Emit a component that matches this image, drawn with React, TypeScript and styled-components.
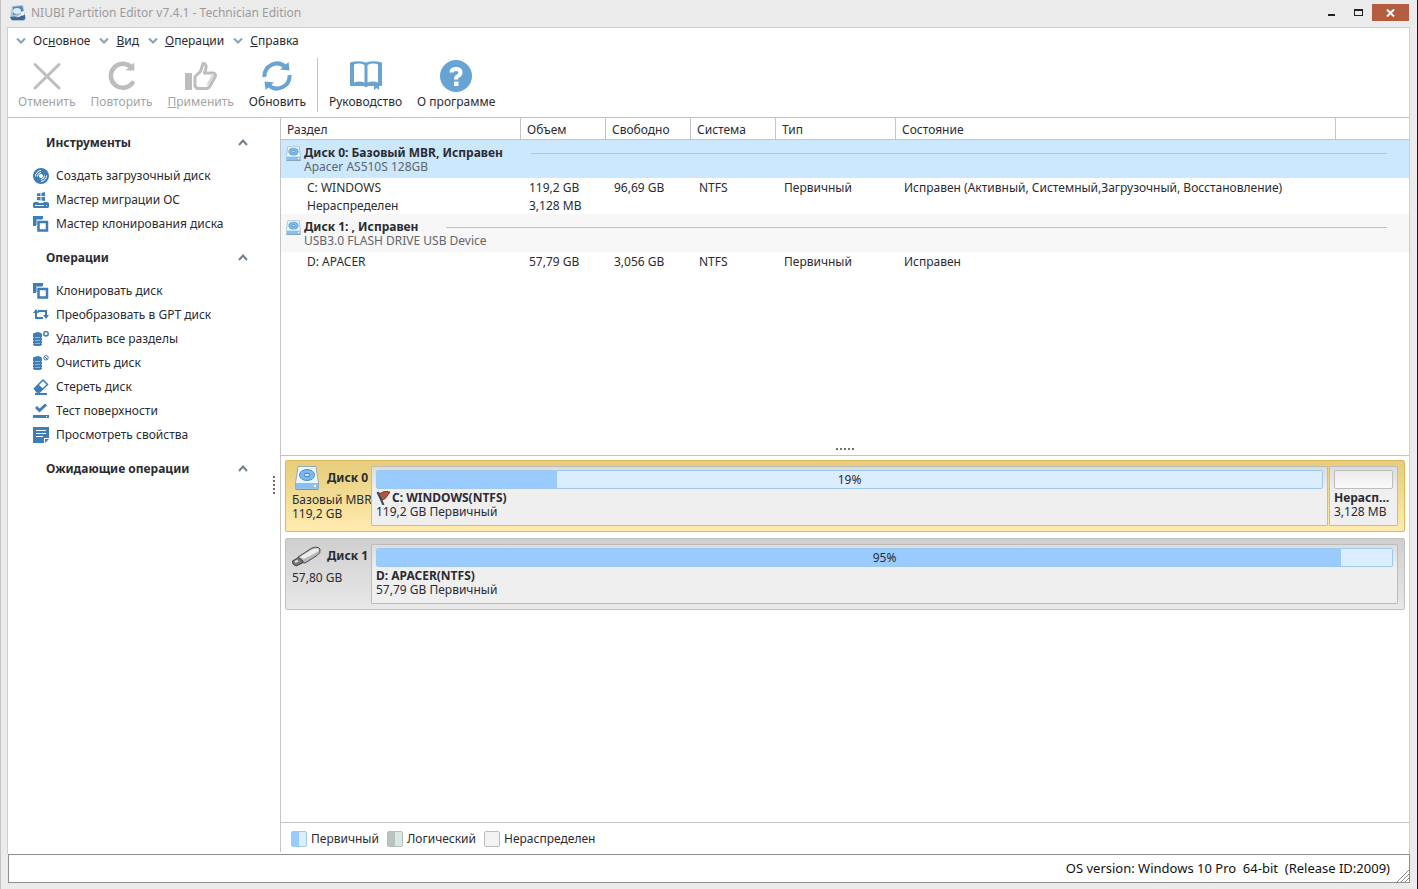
import React from "react";
import styled, { createGlobalStyle, css } from "styled-components";

const GlobalStyle = createGlobalStyle`
  *, *::before, *::after { box-sizing: border-box; }
  body {
    margin: 0;
    background: #ebebeb;
    color: #2b2b33;
    font-family: "Noto Sans", "Open Sans", sans-serif;
    font-size: 12px;
    line-height: 14px;
  }
  button {
    font: inherit;
    color: inherit;
    background: none;
    border: 0;
    padding: 0;
  }
  h2, ul, p { margin: 0; padding: 0; font-size: inherit; }
  ul { list-style: none; }
`;

const line = "#c3c3c3";
const blue = "#3d7db8";

/* ---------- window ---------- */

const Window = styled.div`
  display: flex;
  flex-direction: column;
  min-height: 100vh;
  padding: 0 7px 6px 6px;
  background: #ebebeb;
  border-left: 1px solid #c4c4c4;
  border-right: 1px solid #2a1728;
`;

const TitleBar = styled.header`
  display: flex;
  align-items: center;
  gap: 5px;
  height: 27px;
  padding: 0 1px 2px 3px;
  color: #9b9b9b;
`;

const Title = styled.h1`
  flex: 1;
  margin: 0;
  font-size: 12px;
  font-weight: 400;
`;

const WindowControls = styled.div`
  display: flex;
  align-items: center;
`;

const ControlButton = styled.button<{ $close?: boolean }>`
  display: grid;
  place-items: center;
  width: ${(p) => (p.$close ? 37 : 27)}px;
  height: 17px;
  background: ${(p) => (p.$close ? "#b35c40" : "transparent")};
`;

const Client = styled.main`
  flex: 1;
  display: flex;
  flex-direction: column;
  background: #fff;
  border: 1px solid #cfcfcf;
  border-bottom: 0;
`;

/* ---------- menu and toolbar ---------- */

const MenuBar = styled.nav`
  display: flex;
  gap: 9px;
  height: 26px;
  padding-left: 8px;
`;

const MenuButton = styled.button`
  display: flex;
  align-items: center;
  gap: 7px;
`;

const ToolBar = styled.div`
  display: flex;
  align-items: center;
  gap: 15px;
  height: 64px;
  padding: 0 10px 2px;
  border-bottom: 1px solid ${line};
`;

const ToolButton = styled.button<{ $width: number }>`
  display: flex;
  flex-direction: column;
  align-items: center;
  gap: 3px;
  min-width: ${(p) => p.$width}px;
  white-space: nowrap;
  &:disabled { color: #a3a3a3; }
`;

const ToolSeparator = styled.span`
  width: 1px;
  height: 54px;
  margin: 0 -4px;
  background: ${line};
`;

/* ---------- work area ---------- */

const Work = styled.div`
  flex: 1;
  display: flex;
  margin-bottom: 2px;
`;

const SideBar = styled.aside`
  display: flex;
  width: 273px;
  border-right: 1px solid ${line};
`;

const Sections = styled.div`
  flex: 1;
  display: flex;
  flex-direction: column;
  gap: 10px;
  padding: 13px 0 0 24px;
`;

const SectionHead = styled.button`
  display: flex;
  align-items: center;
  justify-content: space-between;
  width: 100%;
  height: 24px;
  padding: 0 20px 0 14px;
  font-weight: 700;
`;

const SectionList = styled.ul`
  padding-top: 9px;
`;

const ActionButton = styled.button`
  display: flex;
  align-items: center;
  gap: 7px;
  height: 24px;
  padding-left: 1px;
  white-space: nowrap;
`;

const Grip = styled.div<{ $vertical?: boolean }>`
  display: flex;
  align-items: center;
  justify-content: center;
  gap: 2px;
  ${(p) =>
    p.$vertical
      ? css`
          flex-direction: column;
          width: 12px;
        `
      : css`
          height: 13px;
          border-bottom: 1px solid ${line};
        `}
  i {
    width: 2px;
    height: 2px;
    background: #6f6f6f;
  }
`;

const Content = styled.section`
  flex: 1;
  display: flex;
  flex-direction: column;
  min-width: 0;
`;

const TableArea = styled.div`
  height: 325px;
`;

const PartitionTable = styled.table`
  width: 100%;
  table-layout: fixed;
  border-collapse: separate;
  border-spacing: 0;
  th {
    height: 22px;
    padding: 3px 6px 0;
    font-weight: 400;
    text-align: left;
    border-right: 1px solid ${line};
    border-bottom: 1px solid ${line};
  }
  th:last-child { border-right: 0; }
  td {
    height: 18px;
    padding: 1px 8px 0;
    white-space: nowrap;
  }
  td:first-child { padding-left: 26px; }
`;

const DiskRow = styled.tr<{ $selected?: boolean }>`
  background: ${(p) => (p.$selected ? "#cce8ff" : "#f7f7f7")};
  td, td:first-child {
    height: 38px;
    padding: 6px 22px 4px 5px;
  }
`;

const DiskCell = styled.div`
  display: flex;
  gap: 3px;
`;

const DiskText = styled.div`
  flex: 1;
`;

const DiskName = styled.div`
  display: flex;
  align-items: center;
  gap: 28px;
  font-weight: 700;
  &::after {
    content: "";
    flex: 1;
    height: 1px;
    background: #bdc3c8;
  }
`;

const DiskModel = styled.div`
  color: #5f656b;
`;

/* ---------- disk map ---------- */

const DiskMap = styled.div`
  flex: 1;
  display: flex;
  flex-direction: column;
  gap: 6px;
  padding: 4px 4px 0;
`;

const DiskCard = styled.article<{ $selected?: boolean }>`
  display: flex;
  height: 72px;
  padding: 5px 6px;
  border: 1px solid ${(p) => (p.$selected ? "#dfb75d" : "#c0c0c0")};
  border-radius: 2px;
  background: ${(p) =>
    p.$selected
      ? "linear-gradient(#e6cd79, #ffebb0)"
      : "linear-gradient(#cfcfcf, #e8e8e8)"};
`;

const DiskLabel = styled.div`
  width: 79px;
  white-space: nowrap;
`;

const DiskLabelHead = styled.div`
  display: flex;
  align-items: center;
  gap: 6px;
  height: 24px;
  margin-bottom: 3px;
  font-weight: 700;
`;

const DeviceIcon = styled.span`
  display: grid;
  place-items: center;
  width: 29px;
`;

const Partitions = styled.div`
  flex: 1;
  display: flex;
  gap: 1px;
  min-width: 0;
`;

const Partition = styled.div<{ $width?: number }>`
  flex: ${(p) => (p.$width ? `0 0 ${p.$width}px` : "1")};
  min-width: 0;
  height: 60px;
  padding: 3px 4px;
  border: 1px solid #bcbcbc;
  border-radius: 1px;
  background: linear-gradient(#dcdcdc, #efefef 40%);
  white-space: nowrap;
`;

const UsageBar = styled.div<{ $empty?: boolean }>`
  display: grid;
  grid-template-rows: 100%;
  align-items: center;
  height: 19px;
  margin-bottom: 2px;
  border: 1px solid ${(p) => (p.$empty ? "#bdbdbd" : "#9cc9f0")};
  border-radius: 2px;
  background: ${(p) => (p.$empty ? "linear-gradient(#ebebeb, #fafafa)" : "#dbedff")};
  text-align: center;
  & > * { grid-area: 1 / 1; }
`;

const UsageFill = styled.span`
  height: 100%;
  background: #99cbff;
`;

const PartitionName = styled.p`
  display: flex;
  font-weight: 700;
`;

const ShortName = styled.span`
  min-width: 0;
  overflow: hidden;
  text-overflow: ellipsis;
`;

/* ---------- legend and status ---------- */

const Legend = styled.ul`
  display: flex;
  align-items: center;
  gap: 8px;
  height: 30px;
  padding: 2px 10px 0;
  border-top: 1px solid ${line};
  li {
    display: flex;
    align-items: center;
    gap: 4px;
  }
`;

const Swatch = styled.span<{ $from: string; $to: string; $edge: string }>`
  width: 16px;
  height: 16px;
  border: 1px solid ${(p) => p.$edge};
  border-radius: 2px;
  background: linear-gradient(90deg, ${(p) => p.$from} 50%, ${(p) => p.$to} 50%);
`;

const StatusBar = styled.footer`
  display: flex;
  align-items: center;
  justify-content: flex-end;
  gap: 6px;
  height: 29px;
  margin-left: 1px;
  color: #111;
  background: #fff;
  border: 1px solid #8f8f8f;
  font-size: 13px;
  white-space: pre;
`;

const StatusText = styled.span`
  padding-bottom: 2px;
`;

const ResizeGrip = styled.svg`
  align-self: flex-end;
`;

/* ---------- drawings ---------- */

const DownChevron = () => (
  <svg width="10" height="6" viewBox="0 0 10 6" fill="none" stroke="#7fa3c0" strokeWidth="2">
    <path d="M1 0.5 5 4.5 9 0.5" />
  </svg>
);

const UpChevron = () => (
  <svg width="10" height="10" viewBox="0 0 10 10" fill="none" stroke="#71808c" strokeWidth="2">
    <path d="M1 7 5 2.5 9 7" />
  </svg>
);

const AppIcon = () => (
  <svg width="16" height="16" viewBox="0 0 16 16">
    <path d="M2 1 13 0 15 9 16 14 14 16 2 16 0 13Z" fill="#a9c5d8" />
    <path d="M3 2 12 1 14 8 3 10Z" fill="#4889bd" />
    <path d="M0 12 15 10 15 14 13 15 2 15Z" fill="#3f6590" />
    <ellipse cx="7" cy="6" rx="4" ry="3" fill="#dceaf3" />
    <path d="M3 11q4 2 8-2l-1-2 5-1-2 5-1-1q-4 4-9 1Z" fill="#f3f7fa" />
  </svg>
);

const CancelIcon = () => (
  <svg width="32" height="32" viewBox="0 0 32 32" stroke="#bdbdbd" strokeWidth="3" strokeLinecap="round">
    <path d="M4 4.500 28 28M28 4.500 4 28" />
  </svg>
);

const RedoIcon = () => (
  <svg width="32" height="32" viewBox="0 0 32 32">
    <path
      d="M25 7A12 12 0 1 0 26.500 23"
      fill="none"
      stroke="#bdbdbd"
      strokeWidth="4.500"
      strokeLinecap="round"
    />
    <path d="M28 2.500 28.500 10.500H19.500Z" fill="#bdbdbd" />
  </svg>
);

const ThumbIcon = () => (
  <svg width="32" height="32" viewBox="0 0 32 32">
    <path d="M0 13h7v17H0Z" fill="#bdbdbd" />
    <path
      d="M10 16.500 15.500 11.500 18 3.500Q21.500 3 21 8L19.500 13H28.500Q31.500 14 30 17L25 26Q23.500 28.500 21 28.500H12L10 26Z"
      fill="#fff"
      stroke="#bdbdbd"
      strokeWidth="3"
      strokeLinejoin="round"
    />
    <path d="M28 15 22.500 25" stroke="#d6d6d6" strokeWidth="2" />
  </svg>
);

const RefreshIcon = () => (
  <svg width="32" height="32" viewBox="0 0 32 32">
    <g fill="none" stroke="#67a3d3" strokeWidth="4">
      <path d="M3.500 17A12.500 12.500 0 0 1 24 6.500" />
      <path d="M28.500 15A12.500 12.500 0 0 1 8 25.500" />
    </g>
    <path d="M27.500 2 28.500 10.500 19 9.500ZM4.500 30 3.500 21.500 13 22.500Z" fill="#67a3d3" />
  </svg>
);

const BookIcon = () => (
  <svg width="32" height="32" viewBox="0 0 32 32">
    <path d="M0 2.500Q8 0 16 2.500 24 0 32 2.500V26H29V30L26.500 28 24 30V26H18L16 27.500 14 26H0Z" fill="#67a3d3" />
    <path d="M4 4.500Q9 2.500 14.500 5V22.500Q9 20.500 4 22.500ZM17.500 5Q23 2.500 28 4.500V22.500Q23 20.500 17.500 22.500Z" fill="#fff" />
  </svg>
);

const HelpIcon = () => (
  <svg width="32" height="32" viewBox="0 0 32 32">
    <circle cx="16" cy="16" r="16" fill="#67a3d3" />
    <path d="M11.500 12.500Q11.500 9 16 9 20.500 9 20.500 12.500 20.500 15 18 16 16 17 16 19.500" fill="none" stroke="#fff" strokeWidth="4" />
    <path d="M14 21.500h4.500v4.500h-4.500Z" fill="#fff" />
  </svg>
);

const DiscIcon = () => (
  <svg width="16" height="16" viewBox="0 0 16 16">
    <circle cx="8" cy="8" r="8" fill={blue} />
    <circle cx="8" cy="8" r="2" fill="#fff" />
    <g fill="none" stroke="#fff">
      <path d="M4.500 8.500A4 4 0 0 1 8 4.500M2.500 8.500A6 6 0 0 1 8 2.500" />
      <path d="M11.500 7.500A4 4 0 0 1 8 11.500M13.500 7.500A6 6 0 0 1 8 13.500" />
    </g>
  </svg>
);

const MigrateIcon = () => (
  <svg width="16" height="16" viewBox="0 0 16 16" fill={blue}>
    <path d="M4 1.500 7.500 1V4H4ZM8.500 1 12 0V4H8.500ZM4 5H7.500V8.500L4 8ZM8.500 5H12V9L8.500 8.500Z" />
    <path d="M0 11 2 10H5L6 11H10L11 10H14L16 11V15L15 16H1L0 15Z" />
    <path d="M2 13h9v1H2ZM13 13h1v1h-1Z" fill="#fff" />
  </svg>
);

const CloneIcon = () => (
  <svg width="16" height="16" viewBox="0 0 16 16">
    <path d="M0 0H10V3H3V10H0Z" fill={blue} />
    <path d="M3 3H9V4H4V9H3Z" fill="#8db6da" />
    <path d="M5.500 6H14V14.500H5.500Z" fill="#fff" stroke={blue} strokeWidth="2.500" />
  </svg>
);

const ConvertIcon = () => (
  <svg width="16" height="16" viewBox="0 0 16 16">
    <g fill="none" stroke={blue} strokeWidth="2">
      <path d="M3 5V11H10M5 4H13V9" />
    </g>
    <path d="M0 6 3 2 6 6ZM10 8H16L13 12Z" fill={blue} />
  </svg>
);

const StackIcon = ({ slash }: { slash?: boolean }) => (
  <svg width="16" height="16" viewBox="0 0 16 16">
    <path d="M1 2 5 1 8 2 9 3V6L8 6.500 9 7V9L8 9.500 9 10V12L8 12.500 9 13V14L7 15H2L0 14V13L1 12.500 0 12V10L1 9.500 0 9V7L1 6.500 0 6V3Z" fill={blue} />
    <path d="M2 6.500h5M2 9.500h5M2 12.500h5" stroke="#8fb6d8" />
    <circle cx="13" cy="2.800" r="2.200" fill="#fff" stroke={blue} strokeWidth={slash ? 1 : 1.5} />
    {slash && <path d="M11.500 1.500 14.500 4.500" stroke={blue} />}
  </svg>
);

const EraserIcon = () => (
  <svg width="16" height="16" viewBox="0 0 16 16">
    <path d="M1.500 9.500 10 1 14.500 5.500 6.500 13H4Z" fill="#fff" stroke={blue} strokeWidth="1.500" />
    <path d="M1 10 5.500 5.500 10.500 10 7 13.500H4Z" fill={blue} />
    <path d="M2 14h12v2H2Z" fill={blue} />
  </svg>
);

const SurfaceIcon = () => (
  <svg width="16" height="16" viewBox="0 0 16 16">
    <path d="M3 4 6.500 7.500 13 1.500" fill="none" stroke={blue} strokeWidth="3" />
    <path d="M0 12h16v3H0Z" fill={blue} />
    <path d="M13 13h1v1h-1Z" fill="#fff" />
  </svg>
);

const NoteIcon = () => (
  <svg width="16" height="16" viewBox="0 0 16 16">
    <path d="M0 0H16V11H11V16H0Z" fill={blue} />
    <path d="M3 3.500h10M3 6.500h10M3 9.500h7" stroke="#fff" />
    <path d="M12 12H16L12 16Z" fill={blue} />
  </svg>
);

const HardDisk = ({ size }: { size: number }) => (
  <svg width={size} height={size} viewBox="0 0 24 24">
    <path d="M3 .500H21L23.500 17V22.500L22.500 23.500H1.500L.500 22.500V17Z" fill="#eef6fc" stroke="#94abbc" />
    <path d="M1 17H23V22.500H1Z" fill="#86c1f5" />
    <path d="M.500 23.200H23.500" stroke="#688da9" />
    <ellipse cx="12" cy="9" rx="7.500" ry="5.500" fill="#7cbaf0" stroke="#4c8fc9" />
    <ellipse cx="12" cy="9" rx="3" ry="1.800" fill="#c3e0f8" stroke="#4185bd" />
    <path d="M19 19h2v2h-2Z" fill="#fff" />
  </svg>
);

const UsbStick = () => (
  <svg width="29" height="22" viewBox="0 0 29 22">
    <path d="M6 12 20 3Q26 1 28 4 29 8 25 10.500L13 18Q8 18 6 12Z" fill="#b9b9b9" stroke="#4a4a4a" />
    <path d="M8 12 21 4 26 3.500 27 6 12 14Z" fill="#ededed" />
    <path d="M.500 16 6.500 12.500 11 16 10.500 18 4 21 1 19Z" fill="#777" stroke="#3a3a3a" />
    <path d="M3 17 6 15.500" stroke="#ddd" strokeWidth="2" />
  </svg>
);

const Flag = () => (
  <svg width="16" height="14" viewBox="0 0 16 14">
    <path d="M2 2Q5 3 7 1 9 0 14 1L11 5Q10 8 6 9Z" fill="#b95439" stroke="#75372e" />
    <path d="M1.500 1 7.500 14" stroke="#34466a" strokeWidth="2" />
  </svg>
);

/* ---------- data ---------- */

const menus = [
  ["Ос", "н", "овное"],
  ["", "В", "ид"],
  ["", "О", "перации"],
  ["", "С", "правка"],
];

const sections = [
  {
    title: "Инструменты",
    items: [
      ["Создать загрузочный диск", <DiscIcon />],
      ["Мастер миграции ОС", <MigrateIcon />],
      ["Мастер клонирования диска", <CloneIcon />],
    ],
  },
  {
    title: "Операции",
    items: [
      ["Клонировать диск", <CloneIcon />],
      ["Преобразовать в GPT диск", <ConvertIcon />],
      ["Удалить все разделы", <StackIcon />],
      ["Очистить диск", <StackIcon slash />],
      ["Стереть диск", <EraserIcon />],
      ["Тест поверхности", <SurfaceIcon />],
      ["Просмотреть свойства", <NoteIcon />],
    ],
  },
  { title: "Ожидающие операции", items: [] },
] as { title: string; items: [string, React.ReactNode][] }[];

const columns: [string, number | undefined][] = [
  ["Раздел", 240],
  ["Объем", 85],
  ["Свободно", 85],
  ["Система", 85],
  ["Тип", 120],
  ["Состояние", 440],
  ["", undefined],
];

const disks = [
  {
    name: "Диск 0: Базовый MBR, Исправен",
    model: "Apacer AS510S 128GB",
    rows: [
      ["C: WINDOWS", "119,2 GB", "96,69 GB", "NTFS", "Первичный", "Исправен (Активный, Системный,Загрузочный, Восстановление)", ""],
      ["Нераспределен", "3,128 MB", "", "", "", "", ""],
    ],
  },
  {
    name: "Диск 1: , Исправен",
    model: "USB3.0 FLASH DRIVE USB Device",
    rows: [["D: APACER", "57,79 GB", "3,056 GB", "NTFS", "Первичный", "Исправен", ""]],
  },
];

const dots = Array.from({ length: 5 }, (_, i) => <i key={i} />);

const Usage = ({ value }: { value: number }) => (
  <UsageBar role="progressbar" aria-label="Занято" aria-valuenow={value}>
    <UsageFill style={{ width: `${value}%` }} />
    <span>{value}%</span>
  </UsageBar>
);

export default function App() {
  return (
    <Window>
      <GlobalStyle />
      <TitleBar>
        <AppIcon />
        <Title>NIUBI Partition Editor v7.4.1 - Technician Edition</Title>
        <WindowControls>
          <ControlButton aria-label="Свернуть">
            <svg width="7" height="7"><path d="M0 5h7v2H0Z" fill="#222" /></svg>
          </ControlButton>
          <ControlButton aria-label="Развернуть">
            <svg width="9" height="7"><path d="M0 0h9v7H0ZM1 2v4h7V2Z" fill="#222" fillRule="evenodd" /></svg>
          </ControlButton>
          <ControlButton $close aria-label="Закрыть">
            <svg width="9" height="8" stroke="#fff" strokeWidth="2"><path d="M1 .500 8 7.500M8 .500 1 7.500" /></svg>
          </ControlButton>
        </WindowControls>
      </TitleBar>

      <Client>
        <MenuBar>
          {menus.map(([before, key, after]) => (
            <MenuButton key={after}>
              <DownChevron />
              <span>{before}<u>{key}</u>{after}</span>
            </MenuButton>
          ))}
        </MenuBar>

        <ToolBar role="toolbar">
          <ToolButton $width={57} disabled><CancelIcon /><span>Отменить</span></ToolButton>
          <ToolButton $width={62} disabled><RedoIcon /><span>Повторить</span></ToolButton>
          <ToolButton $width={64} disabled><ThumbIcon /><span><u>П</u>рименить</span></ToolButton>
          <ToolButton $width={57}><RefreshIcon /><span>Обновить</span></ToolButton>
          <ToolSeparator />
          <ToolButton $width={73}><BookIcon /><span>Руководство</span></ToolButton>
          <ToolButton $width={76}><HelpIcon /><span>О программе</span></ToolButton>
        </ToolBar>

        <Work>
          <SideBar>
            <Sections>
              {sections.map((section) => (
                <section key={section.title}>
                  <h2>
                    <SectionHead aria-expanded="true">
                      {section.title}
                      <UpChevron />
                    </SectionHead>
                  </h2>
                  {section.items.length > 0 && (
                    <SectionList>
                      {section.items.map(([label, icon]) => (
                        <li key={label}><ActionButton>{icon}{label}</ActionButton></li>
                      ))}
                    </SectionList>
                  )}
                </section>
              ))}
            </Sections>
            <Grip $vertical>{dots}</Grip>
          </SideBar>

          <Content>
            <TableArea>
              <PartitionTable>
                <colgroup>
                  {columns.map(([name, width]) => <col key={name} width={width} />)}
                </colgroup>
                <thead>
                  <tr>{columns.map(([name]) => <th key={name}>{name}</th>)}</tr>
                </thead>
                {disks.map((disk, index) => (
                  <tbody key={disk.name}>
                    <DiskRow $selected={index === 0}>
                      <td colSpan={7}>
                        <DiskCell>
                          <HardDisk size={15} />
                          <DiskText>
                            <DiskName>{disk.name}</DiskName>
                            <DiskModel>{disk.model}</DiskModel>
                          </DiskText>
                        </DiskCell>
                      </td>
                    </DiskRow>
                    {disk.rows.map((row) => (
                      <tr key={row[0]}>{row.map((cell, i) => <td key={i}>{cell}</td>)}</tr>
                    ))}
                  </tbody>
                ))}
              </PartitionTable>
            </TableArea>
            <Grip>{dots}</Grip>

            <DiskMap>
              <DiskCard $selected>
                <DiskLabel>
                  <DiskLabelHead><DeviceIcon><HardDisk size={24} /></DeviceIcon>Диск 0</DiskLabelHead>
                  <p>Базовый MBR</p>
                  <p>119,2 GB</p>
                </DiskLabel>
                <Partitions>
                  <Partition>
                    <Usage value={19} />
                    <PartitionName><Flag />C: WINDOWS(NTFS)</PartitionName>
                    <p>119,2 GB Первичный</p>
                  </Partition>
                  <Partition $width={69}>
                    <UsageBar $empty />
                    <PartitionName><ShortName>Нераспределен</ShortName></PartitionName>
                    <p>3,128 MB</p>
                  </Partition>
                </Partitions>
              </DiskCard>
              <DiskCard>
                <DiskLabel>
                  <DiskLabelHead><DeviceIcon><UsbStick /></DeviceIcon>Диск 1</DiskLabelHead>
                  <p>57,80 GB</p>
                </DiskLabel>
                <Partitions>
                  <Partition>
                    <Usage value={95} />
                    <PartitionName>D: APACER(NTFS)</PartitionName>
                    <p>57,79 GB Первичный</p>
                  </Partition>
                </Partitions>
              </DiskCard>
            </DiskMap>

            <Legend>
              <li><Swatch $from="#99cbff" $to="#dbedff" $edge="#9cc9f0" />Первичный</li>
              <li><Swatch $from="#b9c4c2" $to="#d9e8e1" $edge="#b3bfba" />Логический</li>
              <li><Swatch $from="#f3f3f3" $to="#f3f3f3" $edge="#bdbdbd" />Нераспределен</li>
            </Legend>
          </Content>
        </Work>
      </Client>

      <StatusBar>
        <StatusText>OS version: Windows 10 Pro  64-bit  (Release ID:2009)</StatusText>
        <ResizeGrip width="13" height="13" stroke="#8f8f8f">
          <path d="M1 13 13 1M5 13 13 5M9 13 13 9" />
        </ResizeGrip>
      </StatusBar>
    </Window>
  );
}
